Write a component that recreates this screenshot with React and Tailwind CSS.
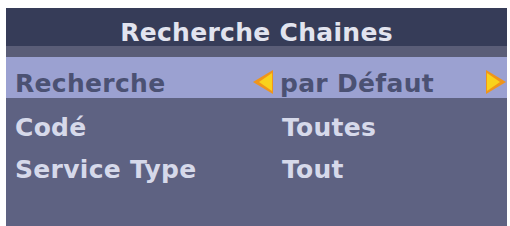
const font = { fontFamily: '"DejaVu Sans", Verdana, sans-serif' };

const ArrowLeft = () => (
  <svg width="20" height="24" viewBox="0 0 20 24" className="shrink-0 blur-[0.6px]">
    <polygon points="20,0 0,12 20,24" fill="#f0951a" />
    <polygon points="19,3 6,12 19,21" fill="#f9d21c" />
  </svg>
);

const ArrowRight = () => (
  <svg width="20" height="24" viewBox="0 0 20 24" className="shrink-0 blur-[0.6px]">
    <polygon points="0,0 20,12 0,24" fill="#f0951a" />
    <polygon points="1,3 14,12 1,21" fill="#f9d21c" />
  </svg>
);

const rows = [
  { label: "Codé", value: "Toutes", mt: "mt-[15px]" },
  { label: "Service Type", value: "Tout", mt: "mt-[13px]" },
];

export default function App() {
  return (
    <div className="w-[510px] h-[226px] bg-white pl-[6px] pt-[8px] pr-[3px] overflow-hidden" style={font}>
      <div className="h-full bg-[#5e6282] flex flex-col font-bold text-[25px] leading-[29px] tracking-[0.3px]">
        <div className="h-[38px] bg-[#363c58] flex justify-center pt-[10px] text-[#e2e4ef]">
          Recherche Chaines
        </div>
        <div className="h-[11px] bg-[#5a5d77]" />
        <div className="h-[41px] bg-[#9ba1d1] pt-[12px] flex items-start pl-[9px]">
          <span className="w-[238px] text-[#4b5173]">Recherche</span>
          <span className="mt-[1px]"><ArrowLeft /></span>
          <span className="ml-[7px] w-[206px] text-[#4b5173]">par Défaut</span>
          <span className="mt-[1px]"><ArrowRight /></span>
        </div>
        {rows.map((r) => (
          <div key={r.label} className={`${r.mt} flex pl-[9px] text-[#d6d9ea]`}>
            <span className="w-[267px]">{r.label}</span>
            <span>{r.value}</span>
          </div>
        ))}
      </div>
    </div>
  );
}
